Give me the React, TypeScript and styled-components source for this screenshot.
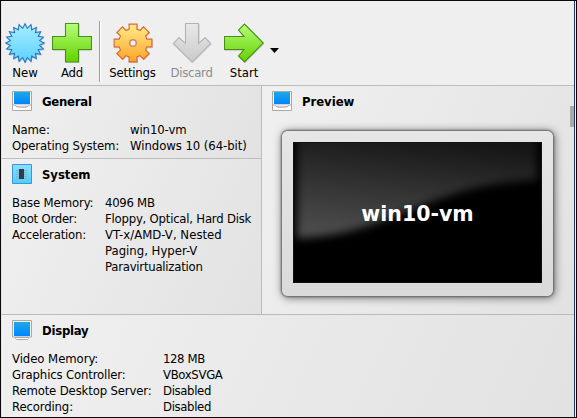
import React from "react";
import styled, { createGlobalStyle } from "styled-components";

const GlobalStyle = createGlobalStyle`
  * { box-sizing: border-box; }
  html, body { margin: 0; padding: 0; overflow: hidden; }
  body { font: 13px/16px "DejaVu Sans Condensed", "DejaVu Sans", sans-serif; font-stretch: condensed; color: #000; }
  svg { display: block; flex: none; }
`;

const Window = styled.div`
  width: 577px;
  height: 418px;
  border: 1px solid #0b080b;
  background: #efefef;
  display: flex;
`;
const Main = styled.main`
  flex: 1;
  display: flex;
  flex-direction: column;
  border-left: 1px solid #e4e4e4;
`;
const RightEdge = styled.div`
  width: 2px;
  border-left: 1px solid #1b3568;
  background: #f4f4f4;
`;

const Toolbar = styled.header`
  height: 85px;
  padding: 20px 0 3px;
  display: flex;
  border-bottom: 1px solid #bcbcbc;
`;
const ToolButton = styled.div<{ $width: number; $muted?: boolean }>`
  width: ${(p) => p.$width}px;
  display: flex;
  flex-direction: column;
  align-items: center;
  padding-top: 1px;
  color: ${(p) => (p.$muted ? "#8b8b8b" : "#000")};
`;
const Separator = styled.div`
  width: 2px;
  margin-left: 3px;
  border-left: 1px solid #9b9b9b;
  border-right: 1px solid #fff;
`;
const ToolLabel = styled.span<{ $spacing?: number }>`
  margin-top: 2px;
  white-space: nowrap;
  letter-spacing: ${(p) => p.$spacing ?? 0}px;
`;
const Caret = styled.div`
  width: 9px;
  height: 5px;
  margin: 27px 0 0 1px;
  background: #000;
  clip-path: polygon(0 0, 100% 0, 50% 100%);
`;

const Details = styled.div`
  flex: 1;
  display: flex;
  flex-direction: column;
`;
const TopRow = styled.div`
  height: 229px;
  display: flex;
  border-bottom: 1px solid #bababa;
`;
const LeftColumn = styled.div`
  width: 260px;
  display: flex;
  flex-direction: column;
  border-right: 1px solid #bcbcbc;
`;
const Panel = styled.section<{ $height?: number; $line?: boolean }>`
  ${(p) => (p.$height ? `height: ${p.$height}px;` : "flex: 1;")}
  padding: 5px 0 0 10px;
  background: linear-gradient(115deg, #f0f0f0, #e2e2e2);
  border-bottom: ${(p) => (p.$line ? "1px solid #bcbcbc" : "0")};
`;
const Heading = styled.h2<{ $spacing?: number }>`
  margin: 0;
  height: 20px;
  display: flex;
  align-items: center;
  gap: 10px;
  font-size: 13px;
  font-weight: 700;
  letter-spacing: ${(p) => p.$spacing ?? -0.05}px;
`;
const HeadingText = styled.span`
  padding-top: 2px;
`;
const Facts = styled.dl<{ $label: number }>`
  margin: 11px 0 0;
  display: grid;
  grid-template-columns: ${(p) => p.$label}px auto;
  white-space: nowrap;
`;
const Term = styled.dt<{ $spacing: number }>`
  letter-spacing: ${(p) => p.$spacing}px;
`;
const Value = styled.dd<{ $spacing: number }>`
  margin: 0;
  letter-spacing: ${(p) => p.$spacing}px;
`;

const MonitorFrame = styled.div`
  width: 271px;
  height: 165px;
  margin: 20px 0 0 10px;
  padding: 11px;
  border-radius: 6px;
  background: linear-gradient(#e6e6e6, #dadada);
  box-shadow: 0 0 2px 1px #666, 1px 1px 8px 1px rgba(0, 0, 0, 0.5);
`;
const Screen = styled.div`
  width: 249px;
  height: 141px;
  display: grid;
  background: #000;
  overflow: hidden;
  > * { grid-area: 1 / 1; }
`;
const ScreenName = styled.div`
  z-index: 1;
  place-self: center;
  padding-top: 2px;
  color: #fff;
  font-family: "DejaVu Sans", sans-serif;
  font-stretch: normal;
  font-size: 20.5px;
  line-height: 26px;
  font-weight: 700;
`;
const ScrollTrack = styled.div`
  width: 4px;
  margin: -5px 0 0 auto;
  padding-top: 20px;
`;
const ScrollThumb = styled.div`
  width: 4px;
  height: 21px;
  background: #a9a9a9;
`;
const PreviewPanel = styled(Panel)`
  display: flex;
`;

const starPoints = Array.from({ length: 40 }, (_, i) => {
  const a = (i * Math.PI) / 20 - Math.PI / 2;
  const r = i % 2 ? 14.8 : 19.3;
  return `${20 + Math.cos(a) * r},${20 + Math.sin(a) * r}`;
}).join(" ");

const gearPoints = Array.from({ length: 8 }, (_, i) =>
  [[-0.27, 14.4], [-0.21, 19.3], [0.21, 19.3], [0.27, 14.4]].map(([d, r]) => {
    const a = (i * Math.PI) / 4 - Math.PI / 2 + d;
    return `${20 + Math.cos(a) * r},${20 + Math.sin(a) * r}`;
  })
)
  .flat()
  .join(" ");

type IconKind = "new" | "add" | "settings" | "discard" | "start";
const iconColors: Record<IconKind, [string, string, string]> = {
  new: ["#a8edff", "#5dd1ff", "#2375c8"],
  add: ["#b4ff78", "#65d000", "#48901c"],
  settings: ["#ffed8b", "#ffa326", "#d9682b"],
  discard: ["#e8e8e8", "#cbcbcb", "#b4b4b4"],
  start: ["#b4ff78", "#65d000", "#48901c"],
};
const iconPoints: Record<IconKind, string> = {
  new: starPoints,
  add: "13.5,.5 26.5,.5 26.5,13.5 39.5,13.5 39.5,26.5 26.5,26.5 26.5,39 13.5,39 13.5,26.5 .5,26.5 .5,13.5 13.5,13.5",
  settings: gearPoints,
  discard: "13.5,.5 26.5,.5 26.5,20.5 33,14.5 38.7,20.5 20,39 1.3,20.5 7,14.5 13.5,20.5",
  start: ".5,13.5 20,13.5 14.5,7 20.5,1 39.3,20 20.5,39 14.5,33 20,26.5 .5,26.5",
};

function ToolIcon({ kind }: { kind: IconKind }) {
  const [top, bottom, stroke] = iconColors[kind];
  return (
    <svg width="40" height="41" viewBox="0 -1 40 41">
      <defs>
        <linearGradient id={kind} x2="0" y2="1">
          <stop stopColor={top} />
          <stop offset="1" stopColor={bottom} />
        </linearGradient>
      </defs>
      <polygon points={iconPoints[kind]} transform="translate(.5 .8)" fill="none" stroke="#777" strokeOpacity=".35" />
      <polygon points={iconPoints[kind]} fill={`url(#${kind})`} stroke={stroke} strokeWidth="1.1" />
      {kind === "settings" && <circle cx="20" cy="20" r="3.3" fill="#efefef" stroke="#d08a60" strokeWidth="1.5" />}
    </svg>
  );
}

function MonitorIcon({ boxed }: { boxed?: boolean }) {
  return (
    <svg width="20" height="20" viewBox="0 0 20 20">
      <defs>
        <linearGradient id="blueScreen" x2="0" y2="1">
          <stop stopColor="#1caae5" />
          <stop offset="1" stopColor="#0085ff" />
        </linearGradient>
      </defs>
      {boxed ? (
        <>
          <path d="M.5 .5h19v19H.5z" fill="#fff" stroke="#a9a9a9" />
          <path d="M1 13h18v2H1z" fill="#d4d4d4" />
          <path d="M3.5 14.5Q4 16 6 16h8q2 0 2.5-1.5" fill="#fff" stroke="#999" />
        </>
      ) : (
        <>
          <path d="M3.5 17.5h13v1l-1 1h-11l-1-1z" fill="#fff" stroke="#aaa" />
          <path d="M.5 .5h19v16.5H.5z" fill="#f4f4ed" stroke="#a9a9a9" />
        </>
      )}
      <path d={boxed ? "M2 1h16v12H2z" : "M2 2h16v14H2z"} fill="url(#blueScreen)" />
    </svg>
  );
}

function ChipIcon() {
  return (
    <svg width="20" height="20" viewBox="0 0 20 20">
      <defs>
        <linearGradient id="chipBack" x2="0" y2="1">
          <stop stopColor="#8be0ff" />
          <stop offset="1" stopColor="#4dceff" />
        </linearGradient>
      </defs>
      <path d="M.5 .5h19v19H.5z" fill="url(#chipBack)" stroke="#3c94df" />
      <path d="M4 6.5h11M4 8.5h11M4 10.5h11M4 12.5h11M4 14.5h11" stroke="#7fb4cf" />
      <path d="M7 5h5v10H7z" fill="#343945" />
    </svg>
  );
}

function Shine() {
  return (
    <svg width="249" height="141" viewBox="0 0 249 141">
      <defs>
        <linearGradient id="shine" x1=".05" y1="1" x2=".3" y2="0">
          <stop stopColor="#505050" />
          <stop offset=".45" stopColor="#363636" />
          <stop offset="1" stopColor="#151515" />
        </linearGradient>
        <filter id="soft" x="-10%" y="-20%" width="120%" height="140%" colorInterpolationFilters="sRGB">
          <feGaussianBlur stdDeviation="4" />
        </filter>
      </defs>
      <path d="M4 -12H244V38C190 40 155 53 118 68C82 82 50 95 4 96Z" fill="url(#shine)" filter="url(#soft)" />
      <path d="M.5 .5h248v140H.5z" fill="none" stroke="#101312" />
    </svg>
  );
}

type Line = [string, number];
type Fact = { term: string; spacing: number; lines: Line[] };
function FactList({ label, items }: { label: number; items: Fact[] }) {
  return (
    <Facts $label={label}>
      {items.map(({ term, spacing, lines }) => (
        <React.Fragment key={term}>
          <Term $spacing={spacing}>{term}</Term>
          <div>
            {lines.map(([text, gap]) => (
              <Value key={text} $spacing={gap}>{text}</Value>
            ))}
          </div>
        </React.Fragment>
      ))}
    </Facts>
  );
}

const general: Fact[] = [
  { term: "Name:", spacing: -0.15, lines: [["win10-vm", -0.1]] },
  { term: "Operating System:", spacing: -0.16, lines: [["Windows 10 (64-bit)", -0.06]] },
];
const system: Fact[] = [
  { term: "Base Memory:", spacing: -0.12, lines: [["4096 MB", -0.28]] },
  { term: "Boot Order:", spacing: -0.24, lines: [["Floppy, Optical, Hard Disk", -0.22]] },
  {
    term: "Acceleration:",
    spacing: -0.2,
    lines: [["VT-x/AMD-V, Nested", 0.03], ["Paging, Hyper-V", 0], ["Paravirtualization", -0.24]],
  },
];
const display: Fact[] = [
  { term: "Video Memory:", spacing: -0.06, lines: [["128 MB", -0.38]] },
  { term: "Graphics Controller:", spacing: -0.15, lines: [["VBoxSVGA", -0.33]] },
  { term: "Remote Desktop Server:", spacing: -0.15, lines: [["Disabled", -0.35]] },
  { term: "Recording:", spacing: -0.14, lines: [["Disabled", -0.35]] },
];

export default function App() {
  return (
    <>
      <GlobalStyle />
      <Window>
        <Main>
          <Toolbar>
            <ToolButton $width={46}><ToolIcon kind="new" /><ToolLabel>New</ToolLabel></ToolButton>
            <ToolButton $width={48}><ToolIcon kind="add" /><ToolLabel $spacing={-0.2}>Add</ToolLabel></ToolButton>
            <Separator />
            <ToolButton $width={63}><ToolIcon kind="settings" /><ToolLabel $spacing={-0.2}>Settings</ToolLabel></ToolButton>
            <ToolButton $width={55} $muted><ToolIcon kind="discard" /><ToolLabel $spacing={-0.25}>Discard</ToolLabel></ToolButton>
            <ToolButton $width={50}><ToolIcon kind="start" /><ToolLabel>Start</ToolLabel></ToolButton>
            <Caret />
          </Toolbar>
          <Details>
            <TopRow>
              <LeftColumn>
                <Panel $height={73} $line>
                  <Heading $spacing={-0.25}><MonitorIcon boxed /><HeadingText>General</HeadingText></Heading>
                  <FactList label={118} items={general} />
                </Panel>
                <Panel>
                  <Heading><ChipIcon /><HeadingText>System</HeadingText></Heading>
                  <FactList label={93} items={system} />
                </Panel>
              </LeftColumn>
              <PreviewPanel>
                <div>
                  <Heading><MonitorIcon boxed /><HeadingText>Preview</HeadingText></Heading>
                  <MonitorFrame>
                    <Screen><Shine /><ScreenName>win10-vm</ScreenName></Screen>
                  </MonitorFrame>
                </div>
                <ScrollTrack><ScrollThumb /></ScrollTrack>
              </PreviewPanel>
            </TopRow>
            <Panel>
              <Heading $spacing={-0.25}><MonitorIcon /><HeadingText>Display</HeadingText></Heading>
              <FactList label={151} items={display} />
            </Panel>
          </Details>
        </Main>
        <RightEdge />
      </Window>
    </>
  );
}
